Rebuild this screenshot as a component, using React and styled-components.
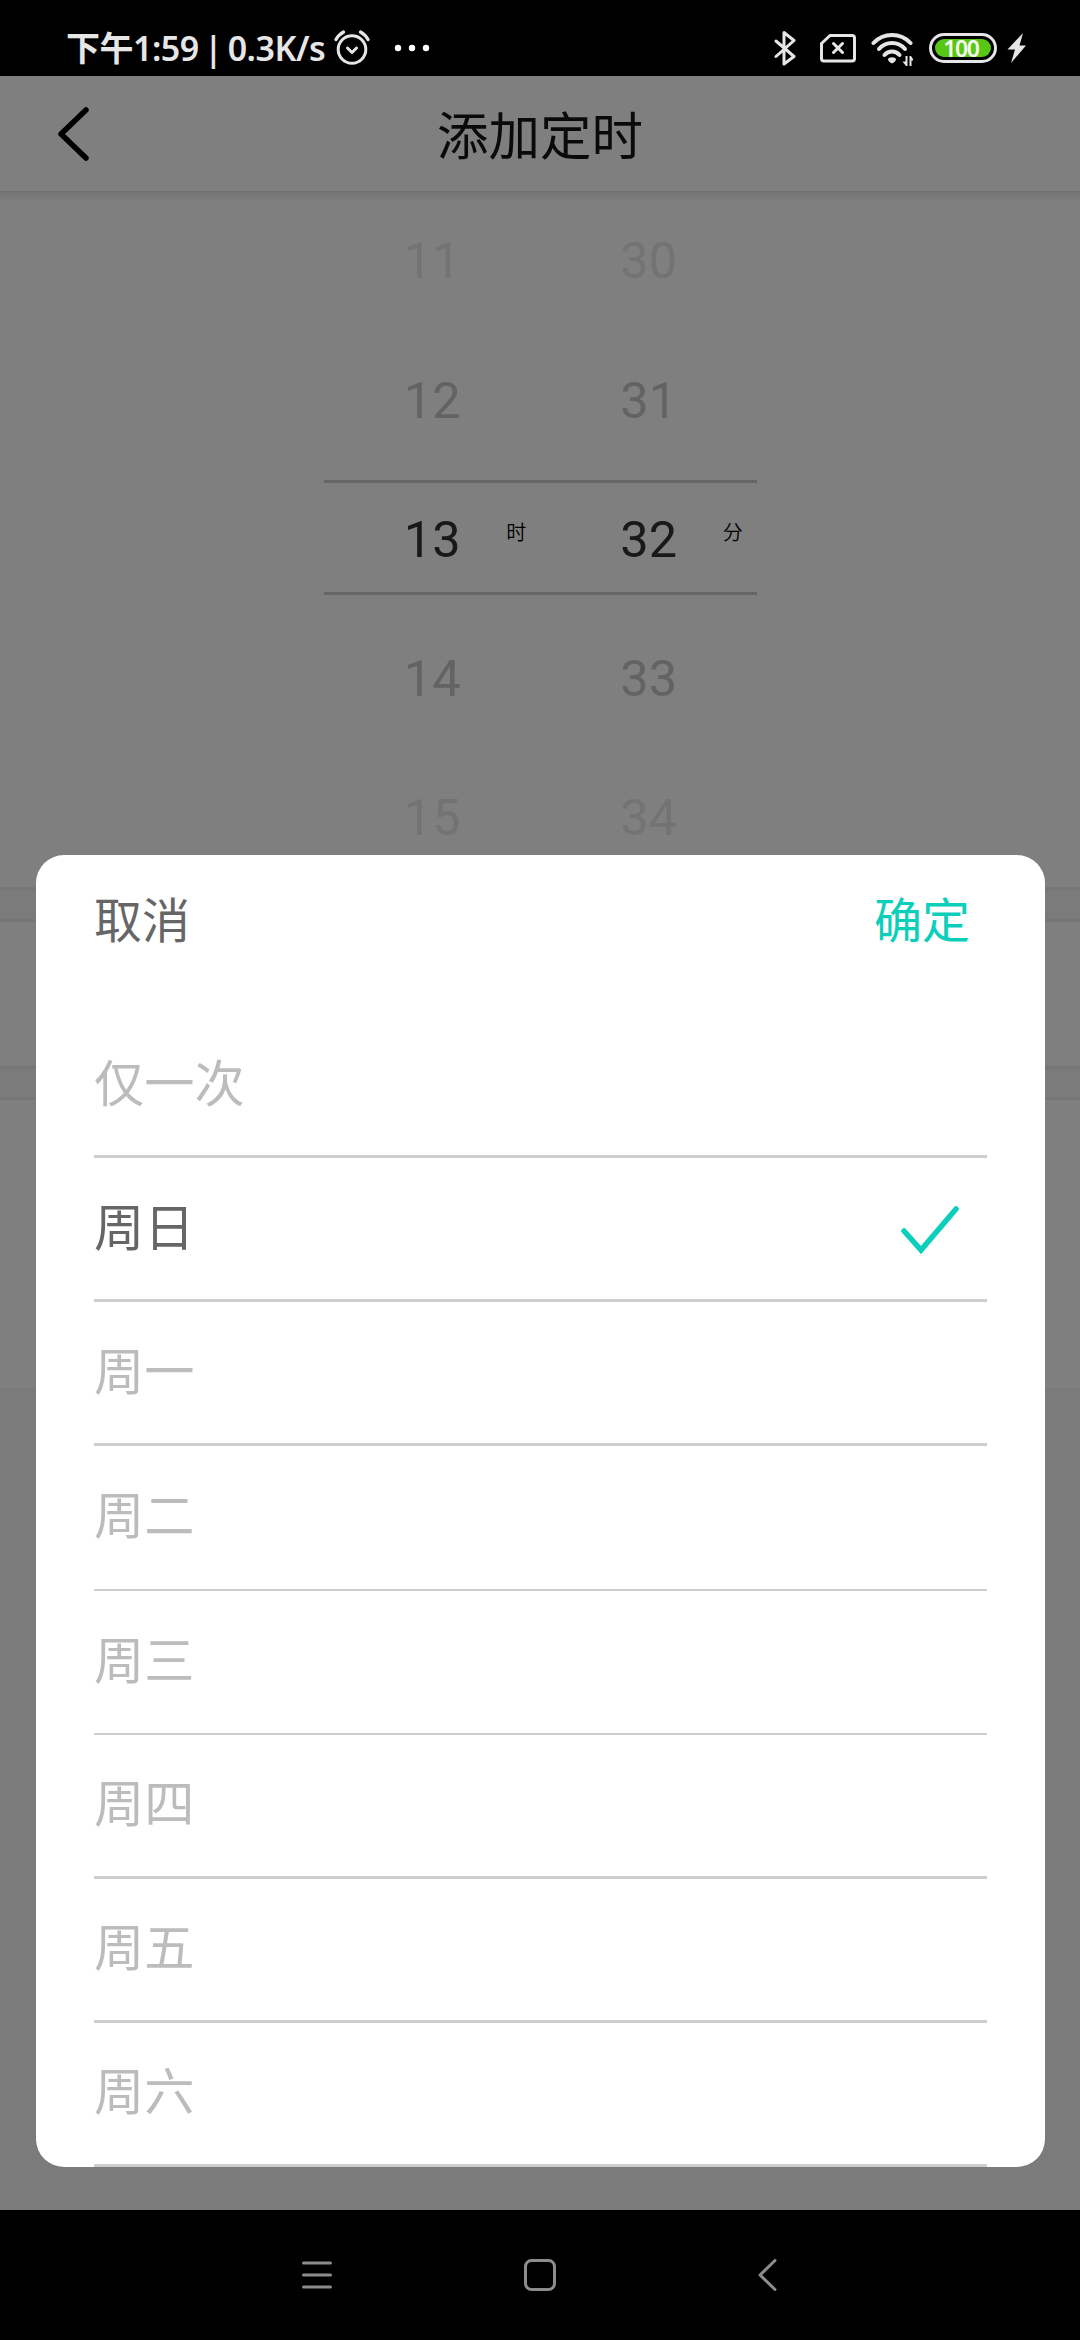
import React from 'react';
import styled, { createGlobalStyle } from 'styled-components';

const GlobalStyle = createGlobalStyle`
  * { box-sizing: border-box; }
  body { margin: 0; background: #000; }
`;

const Screen = styled.div`
  width: 1080px;
  height: 2340px;
  display: flex;
  flex-direction: column;
  overflow: hidden;
  background: #000;
  font-family: Roboto, "Noto Sans CJK SC", sans-serif;
`;

const StatusBar = styled.div`
  height: 76px;
  flex: none;
  display: flex;
  justify-content: space-between;
  align-items: flex-end;
  padding: 0 53px 8px 66px;
  color: #e6e6e6;
`;

const StatusGroup = styled.div`
  display: flex;
  align-items: center;
  height: 40px;
`;

const StatusText = styled.span`
  font: 600 34px/40px "Noto Sans", "Noto Sans CJK SC", sans-serif;
  letter-spacing: -0.5px;
  word-spacing: -3px;
  white-space: nowrap;
  width: ${(p) => p.$width}px;
`;

const StatusIcon = styled.svg`
  display: block;
  flex: none;
  margin-left: ${(p) => p.$gap || 0}px;
`;

const Battery = styled.div`
  width: 68px;
  height: 30px;
  margin-left: 16px;
  padding: 3px;
  border: 3px solid #e6e6e6;
  border-radius: 15px;
  display: flex;
`;

const BatteryLevel = styled.div`
  flex: 1;
  border-radius: 9px;
  background: #58c614;
  color: #f4fbef;
  display: flex;
  align-items: center;
  justify-content: center;
  padding-right: 4px;
  font: 600 23px/18px "Noto Sans", sans-serif;
  letter-spacing: -1.4px;
`;

const Stage = styled.main`
  height: 2134px;
  flex: none;
  position: relative;
  background: #f7f7f7;
`;

const Header = styled.header`
  height: 115px;
  display: grid;
  grid-template-columns: 108px 1fr 108px;
  align-items: center;
  background: #fff;
`;

const BackIcon = styled.svg`
  display: block;
  margin-left: 56px;
`;

const Title = styled.h1`
  margin: 0;
  padding-top: 8px;
  text-align: center;
  font-weight: 400;
  font-size: 51.5px;
  line-height: 76px;
  color: #141414;
`;

const PickerPanel = styled.section`
  height: 696px;
  display: flex;
  justify-content: center;
  padding-left: 1px;
  background: linear-gradient(#e4e4e4, #fff 11px);
`;

const Wheel = styled.div`
  width: 216.5px;
`;

const WheelRow = styled.div`
  height: ${(p) => p.$height}px;
  display: grid;
  grid-template-columns: 1fr 60px 1fr;
  align-items: center;
  border-style: solid;
  border-color: #cdcdcd;
  border-width: ${(p) => (p.$selected ? '3px 0' : '0')};
  padding-top: ${(p) => p.$before || 0}px;
  padding-bottom: ${(p) => p.$after || 0}px;
  color: ${(p) => p.$color};
`;

const WheelValue = styled.span`
  grid-column: 2;
  text-align: center;
  font: 400 50.5px/60px Roboto, sans-serif;
`;

const WheelUnit = styled.span`
  padding-left: 44px;
  padding-bottom: 16px;
  font: 350 20px/26px "Noto Sans CJK SC", sans-serif;
  color: #000;
`;

const Band = styled.div`
  height: ${(p) => p.$height}px;
  border-top: 3px solid #ededed;
  border-bottom: 3px solid #ededed;
`;

const Panel = styled.div`
  height: ${(p) => p.$height}px;
  background: #fff;
`;

const Scrim = styled.div`
  position: absolute;
  inset: 0;
  background: rgba(0, 0, 0, 0.5);
  display: flex;
  align-items: flex-end;
  padding: 0 35px 43px 36px;
`;

const Dialog = styled.div`
  width: 100%;
  height: 1312px;
  border-radius: 28px;
  background: #fff;
  padding: 0 58px;
  display: flex;
  flex-direction: column;
`;

const Actions = styled.div`
  height: 159px;
  flex: none;
  display: flex;
  justify-content: space-between;
  padding: 26px 17px 0 0;
`;

const Action = styled.button`
  appearance: none;
  border: 0;
  padding: 0;
  height: 72px;
  background: none;
  font: 400 48px/72px "Noto Sans CJK SC", sans-serif;
  color: ${(p) => (p.$primary ? '#0bcfba' : '#666')};
`;

const Options = styled.ul`
  list-style: none;
  margin: 0;
  padding: 0;
  flex: 1;
  display: grid;
  grid-template-rows: repeat(8, 1fr);
`;

const Option = styled.li`
  display: flex;
  justify-content: space-between;
  align-items: center;
  padding-right: 27px;
  border-bottom: ${(p) => (p.$thin ? 2 : 3)}px solid #cecece;
  color: ${(p) => (p.$selected ? '#666' : '#bcbcbc')};
`;

const OptionLabel = styled.span`
  padding-bottom: 10px;
  font: 400 50.2px/72px "Noto Sans CJK SC", sans-serif;
`;

const NavBar = styled.nav`
  height: 130px;
  flex: none;
  display: grid;
  grid-template-columns: 222px 233px 20px;
  padding-left: 302px;
  align-items: center;
  background: #000;
`;

const hours = ['11', '12', '13', '14', '15'];
const minutes = ['30', '31', '32', '33', '34'];
const rowStyles = [
  { height: 142, color: '#e6e6e6', after: 2 },
  { height: 147, color: '#c6c6c6', after: 12 },
  { height: 115, color: '#333333', before: 4 },
  { height: 168, color: '#c6c6c6' },
  { height: 110, color: '#e6e6e6' },
];
const days = ['仅一次', '周日', '周一', '周二', '周三', '周四', '周五', '周六'];

function TimeWheel({ values, unit }) {
  return (
    <Wheel>
      {values.map((value, i) => (
        <WheelRow
          key={value}
          $selected={i === 2}
          $height={rowStyles[i].height}
          $color={rowStyles[i].color}
          $before={rowStyles[i].before}
          $after={rowStyles[i].after}
        >
          <WheelValue>{value}</WheelValue>
          {i === 2 && <WheelUnit>{unit}</WheelUnit>}
        </WheelRow>
      ))}
    </Wheel>
  );
}

export default function App() {
  return (
    <Screen>
      <GlobalStyle />
      <StatusBar>
        <StatusGroup>
          <StatusText $width={268}>下午1:59 | 0.3K/s</StatusText>
          <StatusIcon width="36" height="36" viewBox="0 0 36 36" fill="none" stroke="#e6e6e6" strokeWidth="3" strokeLinecap="round" strokeLinejoin="round">
            <circle cx="18" cy="19.500" r="13.800" />
            <path d="M13.500 18l4.500 4.500 4.500-4.500" />
            <path d="M2 9.500C3.500 6.500 6 4 9.500 2M34 9.500C32.500 6.500 30 4 26.500 2" strokeWidth="3.200" />
          </StatusIcon>
          <StatusIcon $gap={24} width="36" height="8" viewBox="0 0 36 8" fill="#fff">
            <circle cx="4" cy="4" r="3.200" />
            <circle cx="18" cy="4" r="3.200" />
            <circle cx="32" cy="4" r="3.200" />
          </StatusIcon>
        </StatusGroup>
        <StatusGroup>
          <StatusIcon width="24" height="36" viewBox="0 0 24 36" fill="none" stroke="#e6e6e6" strokeWidth="3" strokeLinejoin="round" strokeLinecap="round">
            <path d="M3 11l18 15.500-10 7.500V2.500l10 8L3 26.500" />
          </StatusIcon>
          <StatusIcon $gap={22} width="38" height="30" viewBox="0 0 38 30" fill="none" stroke="#e6e6e6" strokeWidth="3" strokeLinejoin="round" strokeLinecap="round">
            <path d="M11 2.500h22a2.500 2.500 0 0 1 2.500 2.500v20.500a2.500 2.500 0 0 1-2.500 2.500H5a2.500 2.500 0 0 1-2.500-2.500V10.500z" />
            <path d="M14.500 10.500l9 9M23.500 10.500l-9 9" />
          </StatusIcon>
          <StatusIcon $gap={12} width="44" height="36" viewBox="0 0 44 36" fill="none" stroke="#e6e6e6" strokeWidth="4" strokeLinecap="round">
            <path d="M4.500 13a25.400 25.400 0 0 1 37 0" />
            <path d="M10 19a17 17 0 0 1 26 0" />
            <path d="M15.500 25a10 10 0 0 1 15 0" />
            <path d="M18.800 29.500c1-3 7.400-3 8.400 0q-1.500 3.500-4.200 4-2.700-.5-4.200-4z" fill="#e6e6e6" stroke="none" />
            <path d="M36.500 26h2v10h-1.500l-3.500-4.500h3zM40.500 36V26h1.500l3 4.500h-2.500V36z" fill="#e6e6e6" stroke="none" />
          </StatusIcon>
          <Battery>
            <BatteryLevel>100</BatteryLevel>
          </Battery>
          <StatusIcon $gap={10} width="20" height="30" viewBox="0 0 20 30" fill="#e6e6e6">
            <path d="M16 0L0.500 16.500h7.500L4 30 19 12.500h-6.500z" />
          </StatusIcon>
        </StatusGroup>
      </StatusBar>

      <Stage>
        <Header>
          <BackIcon width="36" height="56" viewBox="0 0 36 56" fill="none" stroke="#000" strokeWidth="5.500" strokeLinecap="round" strokeLinejoin="round">
            <path d="M30 4L5 28l25 24" />
          </BackIcon>
          <Title>添加定时</Title>
        </Header>
        <PickerPanel>
          <TimeWheel values={hours} unit="时" />
          <TimeWheel values={minutes} unit="分" />
        </PickerPanel>
        <Band $height={35} />
        <Panel $height={144} />
        <Band $height={34} />
        <Panel $height={288} />
        <Scrim>
          <Dialog>
            <Actions>
              <Action>取消</Action>
              <Action $primary>确定</Action>
            </Actions>
            <Options>
              {days.map((day, i) => (
                <Option key={day} $selected={day === '周日'} $thin={i === 3 || i === 4}>
                  <OptionLabel>{day}</OptionLabel>
                  {day === '周日' && (
                    <svg width="60" height="50" viewBox="0 0 60 50" fill="none" stroke="#0bcfba" strokeWidth="5.500" strokeLinecap="round">
                      <path d="M4 27l17 19L56 5" />
                    </svg>
                  )}
                </Option>
              ))}
            </Options>
          </Dialog>
        </Scrim>
      </Stage>

      <NavBar>
        <svg width="30" height="28" viewBox="0 0 30 28" stroke="#8c8c8c" strokeWidth="3" strokeLinecap="round">
          <path d="M1.500 2h27M1.500 14h27M1.500 26h27" />
        </svg>
        <svg width="32" height="32" viewBox="0 0 32 32" fill="none" stroke="#8c8c8c" strokeWidth="3">
          <rect x="1.500" y="1.500" width="29" height="29" rx="6" />
        </svg>
        <svg width="20" height="32" viewBox="0 0 20 32" fill="none" stroke="#8c8c8c" strokeWidth="3" strokeLinecap="round" strokeLinejoin="round">
          <path d="M18 1.500L3 16l15 14.500" />
        </svg>
      </NavBar>
    </Screen>
  );
}
